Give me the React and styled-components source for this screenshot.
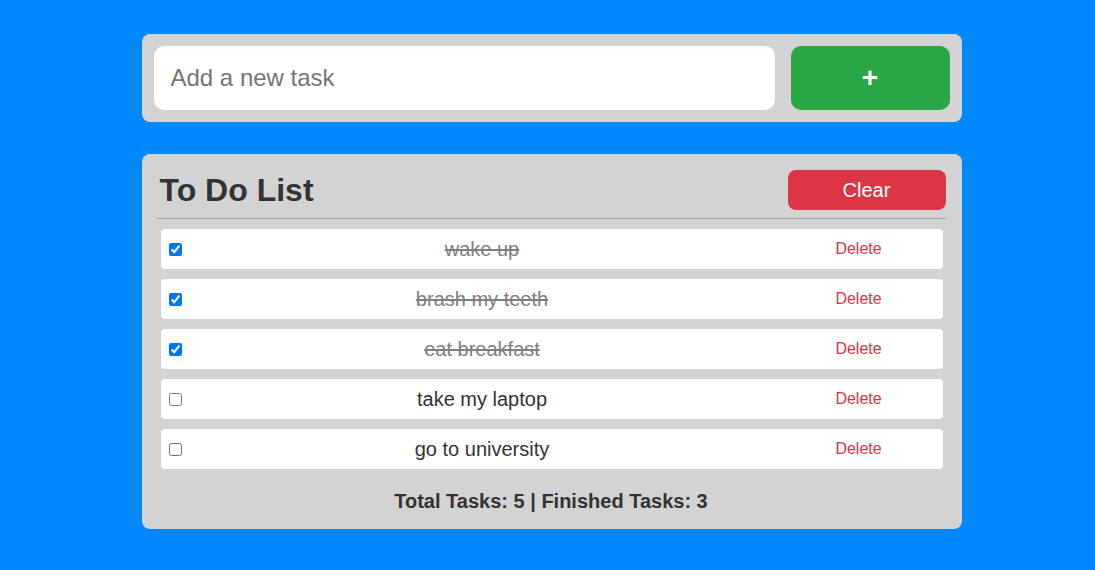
import React, { useState } from 'react'
import styled, { createGlobalStyle } from 'styled-components'

const Global = createGlobalStyle`
  html, body {
    margin: 0;
    padding: 0;
    background: #0088ff;
    font-family: "Liberation Sans", Arial, sans-serif;
  }
`

const Page = styled.div`
  min-height: 570px;
  box-sizing: border-box;
  padding: 34px 0 0 8px;
  display: flex;
  flex-direction: column;
  align-items: center;
  gap: 32px;
`

const Card = styled.div`
  width: 820px;
  box-sizing: border-box;
  background: #d3d3d3;
  border-radius: 8px;
`

const AddBar = styled(Card)`
  display: flex;
  gap: 16px;
  padding: 12px;
`

const Input = styled.input`
  flex: 1;
  height: 64px;
  box-sizing: border-box;
  border: none;
  border-radius: 10px;
  padding: 0 17px;
  font-family: inherit;
  font-size: 24px;
  color: #333;
  background: #fff;
  outline: none;
  &::placeholder {
    color: #757575;
  }
`

const AddButton = styled.button`
  width: 159px;
  height: 64px;
  border: none;
  border-radius: 10px;
  background: #28a745;
  color: #fff;
  font-family: inherit;
  font-size: 28px;
  font-weight: bold;
  cursor: pointer;
`

const ListCard = styled(Card)`
  padding: 16px 16px 16px 15px;
`

const Header = styled.div`
  display: flex;
  align-items: center;
  justify-content: space-between;
  padding-bottom: 8px;
  border-bottom: 1px solid #a0a0a0;
`

const Title = styled.h2`
  margin: 0 0 0 3px;
  font-size: 32px;
  font-weight: bold;
  color: #333;
`

const ClearButton = styled.button`
  width: 158px;
  height: 40px;
  border: none;
  border-radius: 8px;
  background: #dc3545;
  color: #fff;
  font-family: inherit;
  font-size: 20px;
  cursor: pointer;
`

const List = styled.ul`
  list-style: none;
  margin: 10px 3px 0 4px;
  padding: 0;
  display: flex;
  flex-direction: column;
  gap: 10px;
`

const Row = styled.li`
  height: 40px;
  display: flex;
  align-items: center;
  padding: 0 8px;
  background: #fff;
  border-radius: 4px;
`

const Check = styled.input`
  margin: 0;
  width: 13px;
  height: 13px;
`

const TaskText = styled.span`
  flex: 1;
  text-align: center;
  font-size: 20px;
  color: ${p => (p.$done ? '#808080' : '#333')};
  text-decoration: ${p => (p.$done ? 'line-through' : 'none')};
`

const DeleteButton = styled.button`
  width: 152px;
  background: transparent;
  border: none;
  color: #dc3545;
  font-family: inherit;
  font-size: 16px;
  cursor: pointer;
`

const Footer = styled.div`
  margin-top: 20px;
  text-align: center;
  font-size: 20px;
  font-weight: bold;
  color: #333;
  line-height: 24px;
`

const initial = [
  { id: 1, text: 'wake up', done: true },
  { id: 2, text: 'brash my teeth', done: true },
  { id: 3, text: 'eat breakfast', done: true },
  { id: 4, text: 'take my laptop', done: false },
  { id: 5, text: 'go to university', done: false },
]

export default function App() {
  const [tasks, setTasks] = useState(initial)
  const [value, setValue] = useState('')

  const add = () => {
    if (!value.trim()) return
    setTasks([...tasks, { id: Date.now(), text: value, done: false }])
    setValue('')
  }
  const toggle = id => setTasks(tasks.map(t => (t.id === id ? { ...t, done: !t.done } : t)))
  const remove = id => setTasks(tasks.filter(t => t.id !== id))
  const finished = tasks.filter(t => t.done).length

  return (
    <>
      <Global />
      <Page>
        <AddBar>
          <Input placeholder="Add a new task" value={value} onChange={e => setValue(e.target.value)} />
          <AddButton onClick={add}>+</AddButton>
        </AddBar>
        <ListCard>
          <Header>
            <Title>To Do List</Title>
            <ClearButton onClick={() => setTasks([])}>Clear</ClearButton>
          </Header>
          <List>
            {tasks.map(t => (
              <Row key={t.id}>
                <Check type="checkbox" checked={t.done} onChange={() => toggle(t.id)} />
                <TaskText $done={t.done}>{t.text}</TaskText>
                <DeleteButton onClick={() => remove(t.id)}>Delete</DeleteButton>
              </Row>
            ))}
          </List>
          <Footer>
            Total Tasks: {tasks.length} | Finished Tasks: {finished}
          </Footer>
        </ListCard>
      </Page>
    </>
  )
}
